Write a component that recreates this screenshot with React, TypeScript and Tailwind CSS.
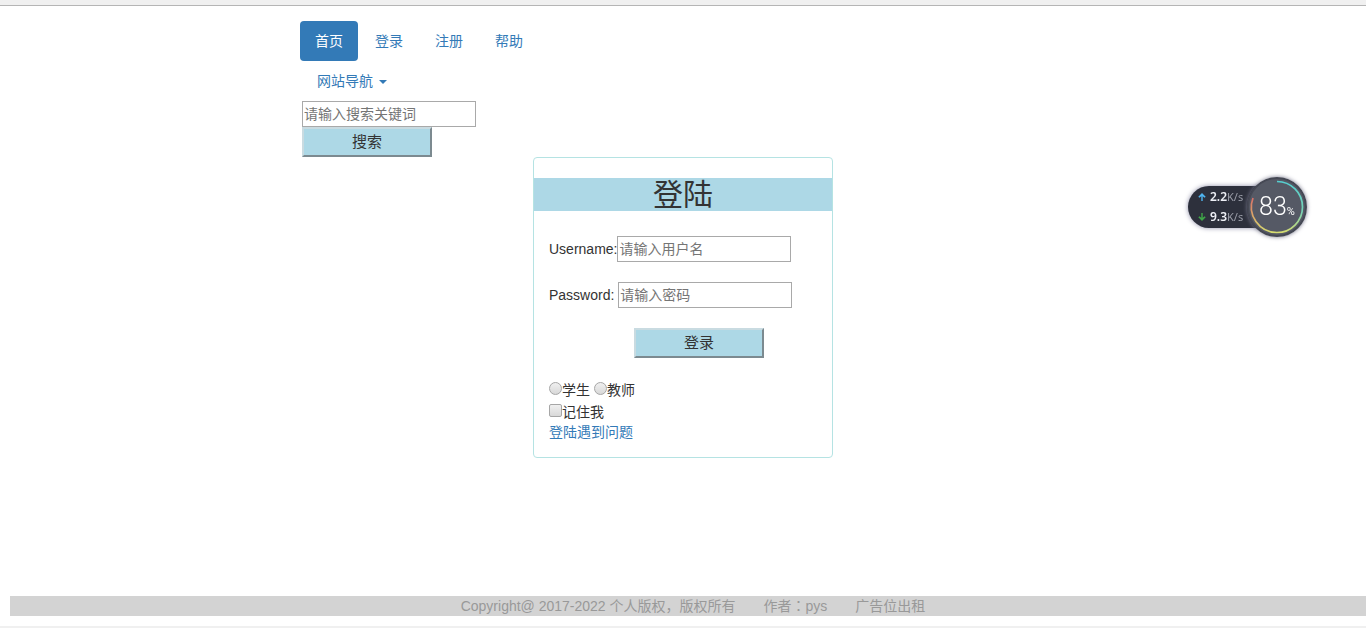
import React, { useState } from 'react';

const navItems = ['首页', '登录', '注册', '帮助'];

const fieldClass =
  'h-[26px] w-[174px] border border-[#a9a9a9] bg-white px-px text-sm text-[#333] placeholder:text-[#757575] focus:outline-none';

const toggleClass =
  'mt-0.5 h-[13px] w-[13px] shrink-0 appearance-none border border-[#a6a6a6] bg-linear-to-b from-[#f0f0f0] to-[#d8d8d8]';

interface BevelButtonProps {
  children: React.ReactNode;
  className?: string;
  type?: 'button' | 'submit';
}

const BevelButton: React.FC<BevelButtonProps> = ({ children, className = '', type = 'button' }) => (
  <button
    type={type}
    className={`block h-[30px] w-[130px] border-2 border-t-[#c9dbe1] border-r-[#7c8a90] border-b-[#7c8a90] border-l-[#c9dbe1] bg-[#add8e6] text-[15px] leading-5 ${className}`}
  >
    {children}
  </button>
);

const NavBar: React.FC = () => {
  const [active, setActive] = useState('首页');

  return (
    <nav>
      <ul className="flex gap-0.5">
        {navItems.map(item => (
          <li key={item}>
            <a
              href="#"
              onClick={() => setActive(item)}
              className={`block rounded px-[15px] py-2.5 ${active === item ? 'bg-[#337ab7] text-white' : 'text-[#337ab7]'}`}
            >
              {item}
            </a>
          </li>
        ))}
      </ul>
      <button type="button" aria-haspopup="menu" className="ml-0.5 flex items-center px-[15px] py-2.5 text-[#337ab7]">
        网站导航
        <span className="mt-0.5 ml-1.5 border-x-4 border-t-4 border-x-transparent border-t-[#337ab7]" />
      </button>
    </nav>
  );
};

const SearchForm: React.FC = () => (
  <form className="ml-0.5" onSubmit={e => e.preventDefault()}>
    <input type="text" aria-label="请输入搜索关键词" placeholder="请输入搜索关键词" className={`block ${fieldClass}`} />
    <BevelButton type="submit">搜索</BevelButton>
  </form>
);

const LoginCard: React.FC = () => (
  <section className="mx-auto w-[300px] rounded border border-[#b5e3e3]">
    <h2 className="mt-5 bg-[#add8e6] text-center text-[30px] leading-[33px]">登陆</h2>
    <form className="px-[15px] pt-[25px] pb-[15px]" onSubmit={e => e.preventDefault()}>
      <div className="mb-5 flex items-center">
        <label htmlFor="username">Username:</label>
        <input id="username" type="text" placeholder="请输入用户名" className={fieldClass} />
      </div>
      <div className="mb-5 flex items-center gap-1">
        <label htmlFor="password">Password:</label>
        <input id="password" type="password" placeholder="请输入密码" className={fieldClass} />
      </div>
      <BevelButton type="submit" className="mb-5 ml-[85px]">登录</BevelButton>
      <div className="flex gap-1 pt-0.5">
        <label className="flex items-start">
          <input type="radio" name="role" value="student" className={`rounded-full ${toggleClass}`} />
          学生
        </label>
        <label className="flex items-start">
          <input type="radio" name="role" value="teacher" className={`rounded-full ${toggleClass}`} />
          教师
        </label>
      </div>
      <label className="flex items-start pt-0.5">
        <input type="checkbox" className={`rounded-xs ${toggleClass}`} />
        记住我
      </label>
      <a href="#" className="block text-[#337ab7]">登陆遇到问题</a>
    </form>
  </section>
);

interface SpeedProps {
  value: string;
  up?: boolean;
}

const Speed: React.FC<SpeedProps> = ({ value, up }) => (
  <div className="flex items-center">
    <svg viewBox="0 0 8 8" className={`mr-1 h-2 w-2 ${up ? 'text-[#4fb4f0]' : 'rotate-180 text-[#3fa648]'}`}>
      <path d="M4 0 7.700 3.800 6.600 4.700 4.700 3.200V8H3.300V3.200L1.400 4.700 0.300 3.800Z" fill="currentColor" />
    </svg>
    <span className="text-xs leading-3.5 font-semibold text-[#eef0f6]">{value}</span>
    <span className="text-[11px] leading-3.5 text-[#9a9da8]">K/s</span>
  </div>
);

// Floating network / memory monitor
const SpeedWidget: React.FC = () => (
  <aside className="fixed top-[177px] right-[59px] flex items-center">
    <div className="-mr-5 flex h-[42px] w-[79px] flex-col justify-between rounded-l-full bg-[#2d303c] py-1 pl-2.5 font-['Noto_Sans',sans-serif] shadow-[0_0_5px_#8f8fa8]">
      <Speed value="2.2" up />
      <Speed value="9.3" />
    </div>
    <div className="relative h-[60px] w-[60px] rounded-full font-['Roboto',sans-serif] shadow-[0_0_4px_#77778c]">
      <svg viewBox="0 0 60 60" className="h-full w-full">
        <defs>
          <linearGradient id="right" x1="0" y1="0" x2="0" y2="1">
            <stop offset="0" stopColor="#55cfd0" />
            <stop offset="0.6" stopColor="#78d3b5" />
            <stop offset="1" stopColor="#d5dc70" />
          </linearGradient>
          <linearGradient id="left" x1="0" y1="0" x2="0" y2="1">
            <stop offset="0" stopColor="#d96f68" />
            <stop offset="0.5" stopColor="#dba568" />
            <stop offset="1" stopColor="#d5dc70" />
          </linearGradient>
        </defs>
        <circle cx="30" cy="30" r="29" fill="#555965" stroke="#454854" strokeWidth="2" />
        <path d="M30 4.500A25.500 25.500 0 0 1 30 55.500" fill="none" stroke="url(#right)" strokeWidth="1.700" />
        <path d="M30 55.500A25.500 25.500 0 0 1 6 21" fill="none" stroke="url(#left)" strokeWidth="1.700" />
      </svg>
      <div className="absolute inset-0 flex items-baseline justify-center pt-3 text-white">
        <span className="text-[25px] leading-9 font-light">83</span>
        <span className="text-[11px]">%</span>
      </div>
    </div>
  </aside>
);

const App: React.FC = () => {
  return (
    <div className="flex min-h-screen flex-col overflow-x-hidden bg-white font-['Liberation_Sans','Noto_Sans_CJK_SC',sans-serif] text-sm leading-5 text-[#333]">
      <div className="h-1.5 border-b border-[#b5b5b5] bg-[#f0f0f0]" />
      <header className="mx-auto w-full max-w-[766px] pt-[15px]">
        <NavBar />
        <SearchForm />
      </header>
      <main className="flex-1">
        <LoginCard />
      </main>
      <footer className="mb-2.5 ml-2.5 flex h-5 justify-center gap-7 bg-[#d3d3d3] pl-2.5 text-[#999]">
        <span>Copyright@ 2017-2022 个人版权，版权所有</span>
        <span className="font-['Liberation_Sans','Noto_Sans_CJK_JP',sans-serif]">作者：pys</span>
        <span>广告位出租</span>
      </footer>
      <div className="h-0.5 bg-[#f0f0f0]" />
      <SpeedWidget />
    </div>
  );
};

export default App;
